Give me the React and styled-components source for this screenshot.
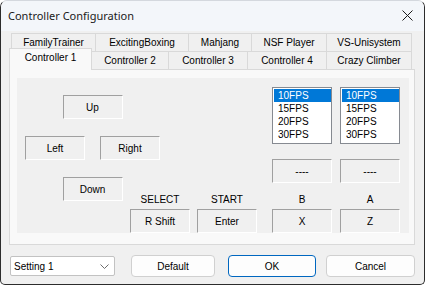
import styled, { createGlobalStyle } from "styled-components"

const backTabs = [
  { label: "FamilyTrainer", width: 85 },
  { label: "ExcitingBoxing", width: 94 },
  { label: "Mahjang", width: 64 },
  { label: "NSF Player", width: 76 },
  { label: "VS-Unisystem", width: 86 },
]

const frontTabs = [
  { label: "Controller 1", width: 83, active: true },
  { label: "Controller 2", width: 78 },
  { label: "Controller 3", width: 80 },
  { label: "Controller 4", width: 80 },
  { label: "Crazy Climber", width: 86 },
]

const rates = ["10FPS", "15FPS", "20FPS", "30FPS"]

const turbo = [
  { name: "B", key: "X", gap: 15 },
  { name: "A", key: "Z", gap: 8 },
]

export default function App() {
  return (
    <>
      <GlobalStyle />
      <Window>
        <TitleBar>
          <Title>Controller Configuration</Title>
          <CloseIcon width="11" height="11" viewBox="0 0 11 11">
            <path d="M0.5 0.5 L10.5 10.5 M10.5 0.5 L0.5 10.5" stroke="#1b1b1b" strokeWidth="1" fill="none" />
          </CloseIcon>
        </TitleBar>

        <Body>
          <TabRow $back>
            {backTabs.map((t) => (
              <Tab key={t.label} $width={t.width}>{t.label}</Tab>
            ))}
          </TabRow>
          <TabRow>
            {frontTabs.map((t) => (
              <Tab key={t.label} $width={t.width} $active={t.active}>{t.label}</Tab>
            ))}
          </TabRow>

          <Panel>
            <Page>
              <LeftArea>
                <DPad>
                  <KeyBox $span>Up</KeyBox>
                  <KeyBox>Left</KeyBox>
                  <span />
                  <KeyBox>Right</KeyBox>
                  <KeyBox $span>Down</KeyBox>
                </DPad>
                <SystemKeys>
                  <KeyColumn>
                    <KeyLabel>SELECT</KeyLabel>
                    <KeyBox>R Shift</KeyBox>
                  </KeyColumn>
                  <KeyColumn>
                    <KeyLabel>START</KeyLabel>
                    <KeyBox>Enter</KeyBox>
                  </KeyColumn>
                </SystemKeys>
              </LeftArea>

              {turbo.map((b) => (
                <TurboColumn key={b.name} $gap={b.gap}>
                  <ListBox>
                    {rates.map((r, i) => (
                      <ListItem key={r} $selected={i === 0}>{r}</ListItem>
                    ))}
                  </ListBox>
                  <DashBox>----</DashBox>
                  <KeyLabel>{b.name}</KeyLabel>
                  <KeyBox>{b.key}</KeyBox>
                </TurboColumn>
              ))}
            </Page>
          </Panel>

          <Footer>
            <Combo>
              <span>Setting 1</span>
              <svg width="9" height="5" viewBox="0 0 9 5">
                <path d="M0.5 0.5 L4.5 4.5 L8.5 0.5" stroke="#6d6d6d" strokeWidth="1" fill="none" />
              </svg>
            </Combo>
            <Button $width={84} $ml={16}>Default</Button>
            <Button $width={88} $ml={13} $primary>OK</Button>
            <Button $width={89} $ml={10}>Cancel</Button>
          </Footer>
        </Body>
      </Window>
    </>
  )
}

const GlobalStyle = createGlobalStyle`
  body {
    margin: 0;
    background: #ffffff;
    font-family: "Liberation Sans", Arial, sans-serif;
  }
`
const Window = styled.div`
  width: 425px;
  height: 285px;
  box-sizing: border-box;
  border: 1px solid #2c2c2c;
  border-top-color: #d4d8de;
  border-radius: 7px 7px 5px 5px;
  background: #f0f0f0;
  overflow: hidden;
  display: flex;
  flex-direction: column;
`
const TitleBar = styled.div`
  height: 30px;
  flex-shrink: 0;
  display: flex;
  align-items: center;
  justify-content: space-between;
  padding: 0 11px 2px 7px;
  box-sizing: border-box;
  background: #f3f6fa;
`
const Title = styled.div`
  font-family: "Noto Sans", sans-serif;
  font-size: 11px;
  color: #1a1a1a;
`
const CloseIcon = styled.svg`
  display: block;
`
const Body = styled.div`
  padding: 2px 9px 0 8px;
  display: flex;
  flex-direction: column;
`
const TabRow = styled.div`
  display: flex;
  align-items: flex-end;
  height: 18px;
  margin-left: ${(p) => (p.$back ? "2px" : "0")};
`
const Tab = styled.div`
  position: relative;
  z-index: ${(p) => (p.$active ? 3 : 0)};
  width: ${(p) => p.$width}px;
  height: ${(p) => (p.$active ? "22px" : "18px")};
  margin-right: -1px;
  margin-bottom: ${(p) => (p.$active ? "-1px" : "0")};
  box-sizing: border-box;
  border: 1px solid #d9d9d9;
  border-bottom: none;
  background: ${(p) => (p.$active ? "#f9f9f9" : "#f0f0f0")};
  display: flex;
  align-items: center;
  justify-content: center;
  padding-bottom: ${(p) => (p.$active ? "4px" : "1px")};
  font-size: 10px;
  color: #000;
  white-space: nowrap;
`
const Panel = styled.div`
  position: relative;
  z-index: 1;
  height: 176px;
  box-sizing: border-box;
  border: 1px solid #d9d9d9;
  background: #f9f9f9;
  padding: 8px 5px 11px 7px;
`
const Page = styled.div`
  height: 100%;
  background: #f0f0f0;
  display: flex;
`
const LeftArea = styled.div`
  width: 232px;
  margin-left: 8px;
  display: grid;
`
const DPad = styled.div`
  grid-area: 1 / 1;
  align-self: start;
  margin-top: 17px;
  display: grid;
  grid-template-columns: 60px 15px 60px;
  grid-auto-rows: 24px;
  row-gap: 17px;
  width: 135px;
`
const KeyBox = styled.div`
  width: 60px;
  height: 24px;
  box-sizing: border-box;
  border: 1px solid #a0a0a0;
  border-right-color: #ffffff;
  border-bottom-color: #ffffff;
  background: #f0f0f0;
  display: flex;
  align-items: center;
  justify-content: center;
  font-size: 10px;
  color: #000;
  grid-column: ${(p) => (p.$span ? "1 / 4" : "auto")};
  justify-self: center;
`
const DashBox = styled(KeyBox)`
  margin-top: 15px;
`
const SystemKeys = styled.div`
  grid-area: 1 / 1;
  align-self: end;
  justify-self: end;
  display: flex;
  gap: 7px;
`
const KeyColumn = styled.div`
  display: flex;
  flex-direction: column;
  align-items: center;
`
const KeyLabel = styled.div`
  height: 12px;
  line-height: 12px;
  padding: 11px 0 3px;
  font-size: 10px;
  color: #000;
  text-align: center;
`
const TurboColumn = styled.div`
  width: 60px;
  margin-left: ${(p) => p.$gap}px;
  padding-top: 9px;
  display: flex;
  flex-direction: column;
  align-items: center;
`
const ListBox = styled.div`
  width: 60px;
  height: 57px;
  box-sizing: border-box;
  border: 1px solid #868a91;
  background: #ffffff;
  padding: 1px 0 1px 1px;
`
const ListItem = styled.div`
  height: 13px;
  line-height: 13px;
  padding-left: 4px;
  font-size: 10px;
  color: ${(p) => (p.$selected ? "#ffffff" : "#000000")};
  background: ${(p) => (p.$selected ? "#0078d7" : "transparent")};
`
const Footer = styled.div`
  margin-top: 10px;
  height: 22px;
  display: flex;
  align-items: center;
  padding-left: 1px;
`
const Combo = styled.div`
  width: 105px;
  height: 20px;
  box-sizing: border-box;
  border: 1px solid #c2c2c2;
  border-radius: 2px;
  background: #ffffff;
  display: flex;
  align-items: center;
  justify-content: space-between;
  padding: 0 5px 0 3px;
  font-size: 10px;
  color: #000;
`
const Button = styled.div`
  width: ${(p) => p.$width}px;
  height: 22px;
  margin-left: ${(p) => p.$ml}px;
  box-sizing: border-box;
  border: 1px solid ${(p) => (p.$primary ? "#0067c0" : "#d0d0d0")};
  border-radius: 4px;
  background: #fdfdfd;
  display: flex;
  align-items: center;
  justify-content: center;
  font-size: 10px;
  color: #000;
`
